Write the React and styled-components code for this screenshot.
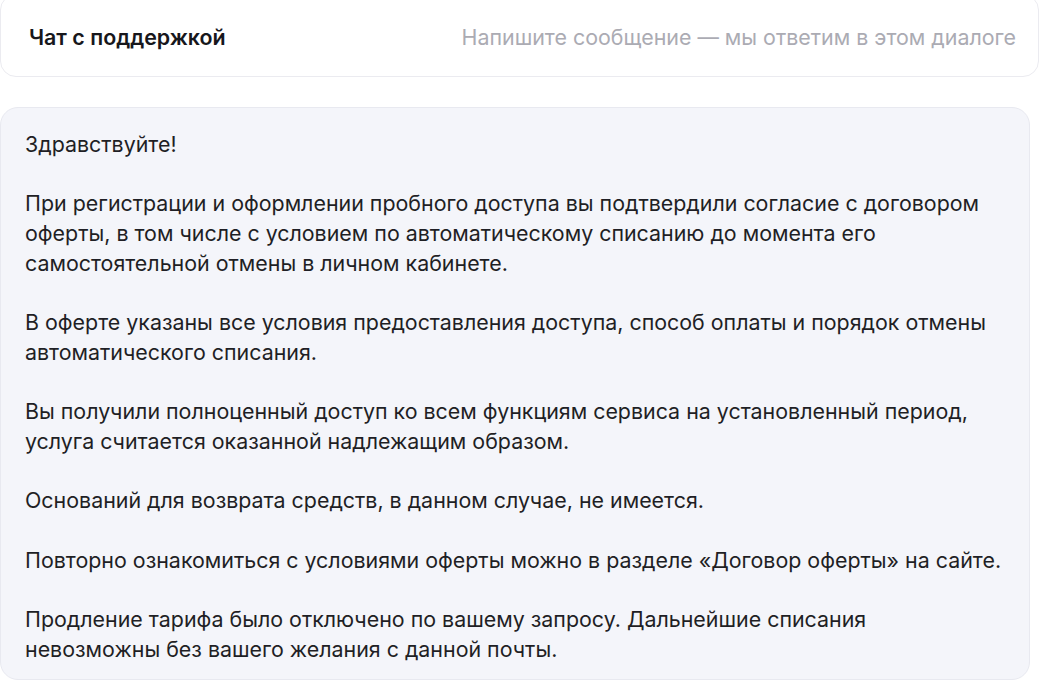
import React from "react";
import styled, { createGlobalStyle } from "styled-components";

const Global = createGlobalStyle`
  html, body { margin: 0; padding: 0; background: #ffffff; overflow: hidden; }
  body { font-family: Inter, "Noto Sans", sans-serif; -webkit-font-smoothing: antialiased; }
  * { box-sizing: border-box; }
`;

const Page = styled.div`
  width: 1039px;
  height: 690px;
  display: flex;
  flex-direction: column;
  gap: 30px;
  margin-top: -6px;
`;

const Header = styled.header`
  height: 83px;
  width: 1039px;
  padding: 2px 22px 0 28px;
  display: flex;
  align-items: center;
  justify-content: space-between;
  background: #ffffff;
  border: 1px solid #ebebf0;
  border-radius: 16px;
`;

const Title = styled.h1`
  margin: 0;
  font-size: 21.4px;
  font-weight: 600;
  color: #17171c;
`;

const Hint = styled.span`
  font-size: 21.4px;
  color: #ababb3;
`;

const Bubble = styled.div`
  width: 1030px;
  padding: 22px 24px 14px 24px;
  background: #f4f5fa;
  border: 1px solid #e8e9f0;
  border-radius: 18px;
  display: flex;
  flex-direction: column;
  gap: 29.7px;
`;

const Para = styled.p`
  margin: 0;
  font-size: 21.4px;
  line-height: 29.7px;
  color: #1f1f25;
`;

const paragraphs = [
  "Здравствуйте!",
  "При регистрации и оформлении пробного доступа вы подтвердили согласие с договором оферты, в том числе с условием по автоматическому списанию до момента его самостоятельной отмены в личном кабинете.",
  "В оферте указаны все условия предоставления доступа, способ оплаты и порядок отмены автоматического списания.",
  "Вы получили полноценный доступ ко всем функциям сервиса на установленный период, услуга считается оказанной надлежащим образом.",
  "Оснований для возврата средств, в данном случае, не имеется.",
  "Повторно ознакомиться с условиями оферты можно в разделе «Договор оферты» на сайте.",
  "Продление тарифа было отключено по вашему запросу. Дальнейшие списания невозможны без вашего желания с данной почты.",
];

export default function App() {
  return (
    <>
      <Global />
      <Page>
        <Header>
          <Title>Чат с поддержкой</Title>
          <Hint>Напишите сообщение — мы ответим в этом диалоге</Hint>
        </Header>
        <Bubble>
          {paragraphs.map((p, i) => (
            <Para key={i}>{p}</Para>
          ))}
        </Bubble>
      </Page>
    </>
  );
}
